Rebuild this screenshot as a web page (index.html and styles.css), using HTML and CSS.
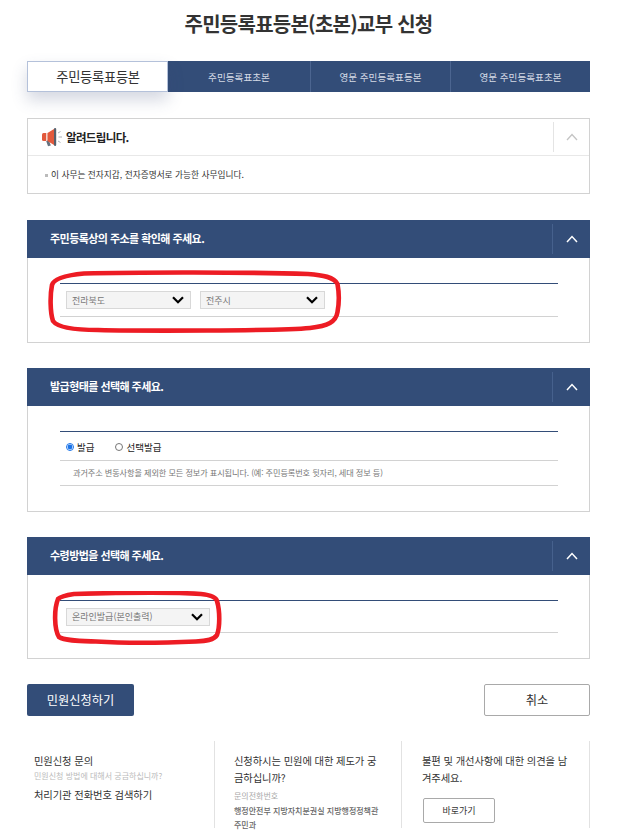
FILE: index.html
```html
<!DOCTYPE html>
<html lang="ko">
<head>
<meta charset="utf-8">
<title>주민등록표등본(초본)교부 신청</title>
<link rel="stylesheet" href="styles.css">
</head>
<body>
<main class="page">
  <h1 class="title">주민등록표등본(초본)교부 신청</h1>
  <nav class="tabs">
    <a class="tab active">주민등록표등본</a>
    <a class="tab t2">주민등록표초본</a>
    <a class="tab t3">영문 주민등록표등본</a>
    <a class="tab t4">영문 주민등록표초본</a>
  </nav>

  <section class="notice">
    <div class="notice-head">
      <svg class="mega" width="22" height="20" viewBox="0 0 22 20">
        <path d="M5 13.500l2.800-.5 2 5.500-2.800 .8z" fill="#66717e"/>
        <path d="M1 7.500Q1 6 2.500 6H5v8H2.500Q1 14 1 12.500z" fill="#e2593c"/>
        <path d="M5 6h1.500v8H5z" fill="#f3d2c8"/>
        <path d="M6.500 6L13 2v16l-6.500-4z" fill="#e2593c"/>
        <rect x="13" y="1" width="2.200" height="18" rx="1.100" fill="#56606c"/>
        <path d="M17 6l2.500-1.500M17.500 10H21M17 14l2.500 1.500" stroke="#aab1b9" stroke-width="1" fill="none"/>
      </svg>
      <strong class="notice-title">알려드립니다.</strong>
      <span class="notice-toggle">
        <svg width="12" height="8" viewBox="0 0 12 8"><path d="M1 7l5-5.500L11 7" fill="none" stroke="#c4c4c4" stroke-width="1.300"/></svg>
      </span>
    </div>
    <div class="notice-body"><span class="dot"></span>이 사무는 전자지갑, 전자증명서로 가능한 사무입니다.</div>
  </section>

  <section class="panel">
    <header class="panel-head">
      <h2>주민등록상의 주소를 확인해 주세요.</h2>
      <span class="panel-toggle"><svg width="12" height="8" viewBox="0 0 12 8"><path d="M1 7l5-5.500L11 7" fill="none" stroke="#fff" stroke-width="1.500"/></svg></span>
    </header>
    <div class="panel-body">
      <div class="rowbox selects">
        <select class="sel w124"><option>전라북도</option></select>
        <select class="sel w124"><option>전주시</option></select>
      </div>
    </div>
    <svg class="mark mark-a" width="294" height="64" viewBox="0 0 294 64"><path d="M36 3.500C90 2 200 2 260 4c15 1 26 3 29.500 10 1.500 8 1.500 20 0 28C288 52 280 56 262 58c-32 3-172 3-212 2C30 60 10 58 5 51 2 42 2 25 4 15 6 8 20 5 36 3.500z" fill="none" stroke="#ed1c24" stroke-width="4.600"/></svg>
  </section>

  <section class="panel">
    <header class="panel-head">
      <h2>발급형태를 선택해 주세요.</h2>
      <span class="panel-toggle"><svg width="12" height="8" viewBox="0 0 12 8"><path d="M1 7l5-5.500L11 7" fill="none" stroke="#fff" stroke-width="1.500"/></svg></span>
    </header>
    <div class="panel-body">
      <div class="rowbox radios">
        <label class="radio"><input type="radio" name="kind" checked>발급</label>
        <label class="radio"><input type="radio" name="kind">선택발급</label>
      </div>
      <p class="hint">과거주소 변동사항을 제외한 모든 정보가 표시됩니다. (예: 주민등록번호 뒷자리, 세대 정보 등)</p>
    </div>
  </section>

  <section class="panel">
    <header class="panel-head">
      <h2>수령방법을 선택해 주세요.</h2>
      <span class="panel-toggle"><svg width="12" height="8" viewBox="0 0 12 8"><path d="M1 7l5-5.500L11 7" fill="none" stroke="#fff" stroke-width="1.500"/></svg></span>
    </header>
    <div class="panel-body">
      <div class="rowbox selects short">
        <select class="sel w144"><option>온라인발급(본인출력)</option></select>
      </div>
    </div>
    <svg class="mark mark-b" width="172" height="56" viewBox="0 0 172 56"><path d="M23 3C60 2 120 1 150 3c10 1 15 3 16 7 3 10 3 26 0 34-3 5-11 6-21 6.500-35 1.500-75 1.500-100 0C30 50 14 50 8 46 3 38 3 18 7 8c3-3 9-4 16-5z" fill="none" stroke="#ed1c24" stroke-width="4.600"/></svg>
  </section>

  <div class="actions">
    <button class="btn primary">민원신청하기</button>
    <button class="btn ghost">취소</button>
  </div>

  <footer class="info">
    <div class="col">
      <p class="lead">민원신청 문의</p>
      <p class="muted">민원신청 방법에 대해서 궁금하십니까?</p>
      <p class="lead">처리기관 전화번호 검색하기</p>
    </div>
    <div class="col">
      <p class="lead">신청하시는 민원에 대한 제도가 궁금하십니까?</p>
      <p class="muted2">문의전화번호</p>
      <p class="dept">행정안전부 지방자치분권실 지방행정정책관 주민과</p>
    </div>
    <div class="col">
      <p class="lead">불편 및 개선사항에 대한 의견을 남겨주세요.</p>
      <button class="btn-go">바로가기</button>
    </div>
  </footer>
</main>
</body>
</html>
```

FILE: styles.css
```css
* { box-sizing: border-box; }
html, body { margin: 0; padding: 0; background: #fff; }
body { font-family: "Noto Sans CJK KR", "Noto Sans", sans-serif; color: #222; height: 835px; overflow: hidden; }
.page { width: 563px; margin-left: 27px; }
p, h1, h2 { margin: 0; }

.title { height: 61px; padding-top: 9px; text-align: center; font-size: 20px; line-height: 30px; font-weight: 700; color: #333; letter-spacing: -0.75px; }

.tabs { display: flex; height: 31px; background: #334d78; margin-bottom: 26px; }
.tab { display: flex; align-items: center; justify-content: center; font-size: 9.600px; color: #d5dbe6; border-left: 1px solid #4c6590; }
.tab.active { width: 141px; padding-left: 1px; background: #fff; border: 1px solid #b4c1da; color: #333; font-size: 13.300px; box-shadow: 0 8px 16px rgba(60, 75, 120, .22); letter-spacing: -0.3px; }
.t2 { width: 142px; border-left: 0; }
.t3 { width: 140px; }
.t4 { width: 140px; }

.notice { height: 76px; border: 1px solid #d2d2d2; margin-bottom: 26px; }
.notice-head { height: 37px; display: flex; align-items: center; padding: 0 0 0 13px; border-bottom: 1px solid #e8e8e8; }
.mega { flex: none; margin-right: 3px; }
.notice-title { font-size: 11.500px; font-weight: 700; color: #222; letter-spacing: -0.65px; flex: 1; }
.notice-toggle { width: 36px; height: 30px; margin-top: -1px; border-left: 1px solid #e4e4e4; display: flex; align-items: center; justify-content: center; }
.notice-body { display: flex; align-items: center; padding: 11px 0 0 17px; font-size: 8.700px; line-height: 16px; color: #333; }
.dot { width: 3px; height: 3px; background: #bbb; margin-right: 3px; }

.panel { position: relative; border: 1px solid #d2d2d2; border-top: 0; margin-bottom: 25px; }
.panel-head { height: 38px; margin: 0 -1px; padding: 0 0 3px 23px; background: #334d78; display: flex; align-items: center; }
.panel-head h2 { flex: 1; font-size: 11px; font-weight: 700; color: #fff; letter-spacing: -0.55px; }
.panel-toggle { width: 38px; height: 30px; margin-top: 2px; border-left: 1px solid #46618d; display: flex; align-items: center; justify-content: center; }
.panel-body { padding: 25px 31px 25px 32px; }

.rowbox { border-top: 1px solid #334d78; border-bottom: 1px solid #d2d2d2; }
.selects { height: 34px; display: flex; align-items: center; gap: 9px; padding: 0 6px; }
.selects.short { height: 33px; }
.sel { appearance: none; height: 18px; padding: 0 0 0 5px; border: 1px solid #d8d8d8; border-radius: 0; background-color: #f4f4f4; background-image: url("data:image/svg+xml,%3Csvg xmlns='http://www.w3.org/2000/svg' width='12' height='8' viewBox='0 0 12 8'%3E%3Cpath d='M1 1.200l5 5 5-5' fill='none' stroke='%23000' stroke-width='2.200'/%3E%3C/svg%3E"); background-repeat: no-repeat; background-position: right 6px center; font-family: inherit; font-size: 9px; color: #777; }
.w124 { width: 125px; }
.w144 { width: 144px; }

.radios { height: 30px; display: flex; align-items: center; gap: 21px; padding: 1px 0 0 6px; }
.radio { display: flex; align-items: center; font-size: 9.500px; color: #222; }
.radio input { width: 8px; height: 8px; margin: 0 3px 0 0; accent-color: #1a73e8; }
.hint { height: 25px; border-bottom: 1px solid #d2d2d2; padding-left: 13px; font-size: 8.170px; line-height: 24px; color: #777; letter-spacing: -0.1px; white-space: nowrap; }

.mark { position: absolute; pointer-events: none; }
.mark-a { left: 20px; top: 50px; }
.mark-b { left: 23px; top: 54px; }

.actions { display: flex; justify-content: space-between; }
.btn { height: 32px; font-family: inherit; font-size: 12.200px; border-radius: 2px; }
.primary { width: 107px; background: #334d78; border: 0; color: #fff; }
.ghost { width: 106px; background: #fff; border: 1px solid #a9a9a9; color: #333; }

.info { display: flex; margin-top: 25px; height: 87px; }
.col { padding: 11px 20px 0 7px; border-right: 1px solid #e2e2e2; }
.col:nth-child(1) { width: 188px; }
.col:nth-child(2) { width: 187px; padding-left: 19px; }
.col:nth-child(3) { width: 188px; padding-left: 20px; }
.lead { font-size: 10.300px; line-height: 17px; color: #333; letter-spacing: -0.1px; }
.muted { font-size: 8px; line-height: 14px; color: #bbb; }
.muted + .lead { margin-top: 3px; }
.muted2 { font-size: 8px; line-height: 15px; color: #aaa; margin-top: 2px; }
.dept { font-size: 8px; line-height: 14px; color: #666; font-weight: 500; margin-top: 1px; }
.btn-go { display: block; width: 72px; height: 25px; margin: 12px 0 0 1px; background: #fff; border: 1px solid #a9a9a9; border-radius: 2px; font-family: inherit; font-size: 9px; color: #333; }
```
